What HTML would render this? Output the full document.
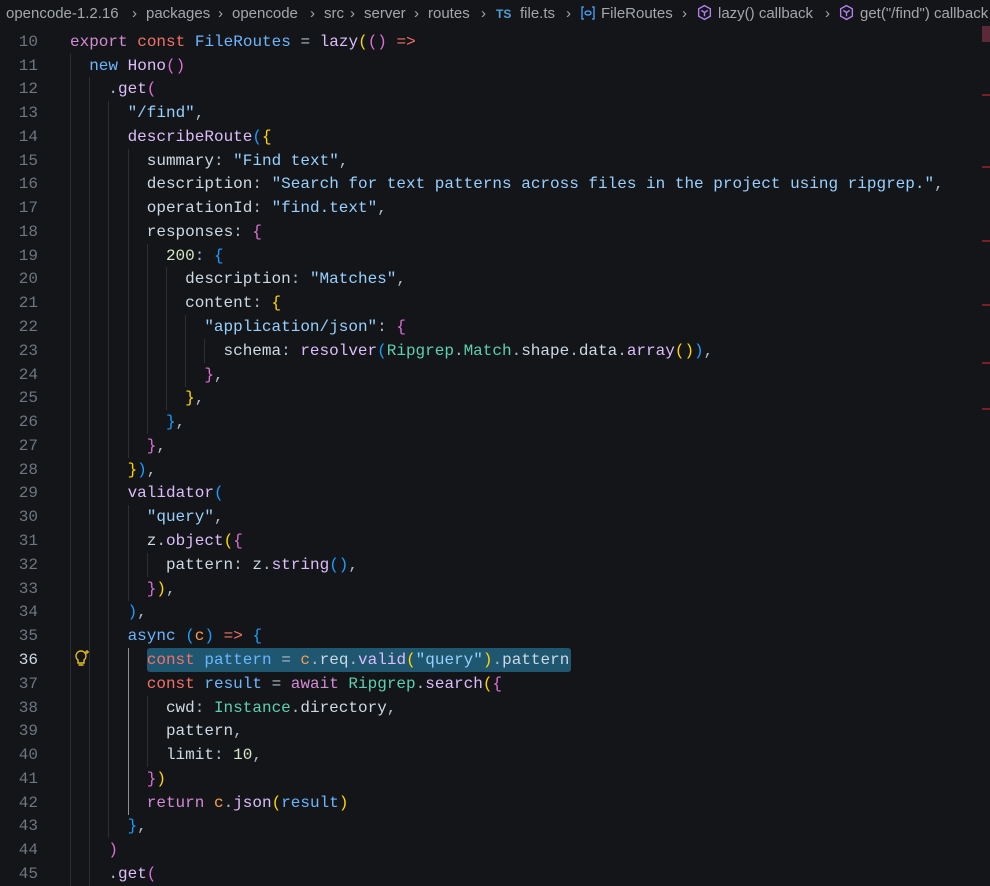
<!DOCTYPE html>
<html><head><meta charset="utf-8"><style>
html,body{margin:0;padding:0;background:#141518;width:990px;height:871px;overflow:hidden}
.bc{position:absolute;top:4px;height:20px;font:15px "Liberation Sans",sans-serif;color:#a3a6ab;white-space:nowrap;line-height:20px}
.sep{position:absolute;top:4px;font:15px "Liberation Sans",sans-serif;color:#a3a6ab;line-height:20px}
.ln{position:absolute;left:0;width:38px;text-align:right;font:16px "Liberation Mono",monospace;color:#6e7681;line-height:24px}
.cl{position:absolute;left:70px;font:16px "Liberation Mono",monospace;color:#adbac7;line-height:24px;white-space:pre;height:24px}
.g{display:inline-block;width:19.2px;height:24px;vertical-align:top;border-left:1px solid #2c2f34;box-sizing:border-box}
.ga{border-left-color:#8b9098}
.k{color:#f47067}.m{color:#d38bd6}.b{color:#6cb6ff}.f{color:#dcbdfb}.p{color:#cdd9e5}.s{color:#96d0ff}.t{color:#5ad1b0}.v{color:#6cb6ff}.c{color:#f69d50}.n{color:#d6e6c8}
.y{color:#ffd700}.pk{color:#da70d6}.bl{color:#179fff}
.sel{position:absolute;left:147px;top:648px;width:424px;height:24px;background:#1f5670;border-radius:3px}
.mm{position:absolute;right:0;width:8px;height:2px;background:#7a1f28}
</style></head><body>
<div class="bc" style="left:6px">opencode-1.2.16</div><div class="sep" style="left:132px">›</div>
<div class="bc" style="left:146px">packages</div><div class="sep" style="left:218px">›</div>
<div class="bc" style="left:232px">opencode</div><div class="sep" style="left:310px">›</div>
<div class="bc" style="left:324px">src</div><div class="sep" style="left:350px">›</div>
<div class="bc" style="left:364px">server</div><div class="sep" style="left:414px">›</div>
<div class="bc" style="left:428px">routes</div><div class="sep" style="left:481px">›</div>
<div class="bc" style="left:496px;color:#4b9fd6;font-weight:bold;font-size:12px">TS</div>
<div class="bc" style="left:520px">file.ts</div><div class="sep" style="left:566px">›</div>
<svg style="position:absolute;left:580px;top:5px" width="16" height="16" viewBox="0 0 16 16" fill="none" stroke="#4aa3ff" stroke-width="1.3"><path d="M4 2H2v12h2M12 2h2v12h-2"/><ellipse cx="8" cy="8" rx="3" ry="2"/></svg>
<div class="bc" style="left:601px">FileRoutes</div><div class="sep" style="left:682px">›</div>
<svg style="position:absolute;left:696px;top:4px" width="17" height="17" viewBox="0 0 16 16" fill="none" stroke="#b180f0" stroke-width="1.3"><path d="M8 1.5l5.5 3v7L8 14.5l-5.5-3v-7z"/><path d="M5 6l3 2 3-2M8 8v3.5"/></svg>
<div class="bc" style="left:718px">lazy() callback</div><div class="sep" style="left:825px">›</div>
<svg style="position:absolute;left:838px;top:4px" width="17" height="17" viewBox="0 0 16 16" fill="none" stroke="#b180f0" stroke-width="1.3"><path d="M8 1.5l5.5 3v7L8 14.5l-5.5-3v-7z"/><path d="M5 6l3 2 3-2M8 8v3.5"/></svg>
<div class="bc" style="left:860px">get("/find") callback</div>

<div class="sel"></div>
<svg style="position:absolute;left:73px;top:648px" width="18" height="20" viewBox="0 0 18 20" fill="none" stroke="#e8c41a" stroke-width="1.4"><path d="M8 3a5 5 0 0 0-3 9v3h6v-3a5 5 0 0 0-3-9z M5.5 17h5"/><path d="M14 2v4M12 4h4" stroke-width="1.2"/></svg>

<div class="ln" style="top:30px">10</div><div class="cl" style="top:30px"><span class="m">export</span> <span class="k">const</span> <span class="v">FileRoutes</span> = <span class="f">lazy</span><span class="y">(</span><span class="pk">()</span> <span class="k">=&gt;</span></div>
<div class="ln" style="top:54px">11</div><div class="cl" style="top:54px"><span class="g"></span><span class="b">new</span> <span class="f">Hono</span><span class="pk">()</span></div>
<div class="ln" style="top:77px">12</div><div class="cl" style="top:77px"><span class="g"></span><span class="g"></span>.<span class="f">get</span><span class="pk">(</span></div>
<div class="ln" style="top:101px">13</div><div class="cl" style="top:101px"><span class="g"></span><span class="g"></span><span class="g"></span><span class="s">"/find"</span>,</div>
<div class="ln" style="top:125px">14</div><div class="cl" style="top:125px"><span class="g"></span><span class="g"></span><span class="g"></span><span class="f">describeRoute</span><span class="bl">(</span><span class="y">{</span></div>
<div class="ln" style="top:149px">15</div><div class="cl" style="top:149px"><span class="g"></span><span class="g"></span><span class="g"></span><span class="g"></span><span class="p">summary</span>: <span class="s">"Find text"</span>,</div>
<div class="ln" style="top:172px">16</div><div class="cl" style="top:172px"><span class="g"></span><span class="g"></span><span class="g"></span><span class="g"></span><span class="p">description</span>: <span class="s">"Search for text patterns across files in the project using ripgrep."</span>,</div>
<div class="ln" style="top:196px">17</div><div class="cl" style="top:196px"><span class="g"></span><span class="g"></span><span class="g"></span><span class="g"></span><span class="p">operationId</span>: <span class="s">"find.text"</span>,</div>
<div class="ln" style="top:220px">18</div><div class="cl" style="top:220px"><span class="g"></span><span class="g"></span><span class="g"></span><span class="g"></span><span class="p">responses</span>: <span class="pk">{</span></div>
<div class="ln" style="top:244px">19</div><div class="cl" style="top:244px"><span class="g"></span><span class="g"></span><span class="g"></span><span class="g"></span><span class="g"></span><span class="n">200</span>: <span class="bl">{</span></div>
<div class="ln" style="top:267px">20</div><div class="cl" style="top:267px"><span class="g"></span><span class="g"></span><span class="g"></span><span class="g"></span><span class="g"></span><span class="g"></span><span class="p">description</span>: <span class="s">"Matches"</span>,</div>
<div class="ln" style="top:291px">21</div><div class="cl" style="top:291px"><span class="g"></span><span class="g"></span><span class="g"></span><span class="g"></span><span class="g"></span><span class="g"></span><span class="p">content</span>: <span class="y">{</span></div>
<div class="ln" style="top:315px">22</div><div class="cl" style="top:315px"><span class="g"></span><span class="g"></span><span class="g"></span><span class="g"></span><span class="g"></span><span class="g"></span><span class="g"></span><span class="s">"application/json"</span>: <span class="pk">{</span></div>
<div class="ln" style="top:339px">23</div><div class="cl" style="top:339px"><span class="g"></span><span class="g"></span><span class="g"></span><span class="g"></span><span class="g"></span><span class="g"></span><span class="g"></span><span class="g"></span><span class="p">schema</span>: <span class="f">resolver</span><span class="bl">(</span><span class="t">Ripgrep</span>.<span class="t">Match</span>.<span class="p">shape</span>.<span class="p">data</span>.<span class="f">array</span><span class="y">()</span><span class="bl">)</span>,</div>
<div class="ln" style="top:363px">24</div><div class="cl" style="top:363px"><span class="g"></span><span class="g"></span><span class="g"></span><span class="g"></span><span class="g"></span><span class="g"></span><span class="g"></span><span class="pk">}</span>,</div>
<div class="ln" style="top:386px">25</div><div class="cl" style="top:386px"><span class="g"></span><span class="g"></span><span class="g"></span><span class="g"></span><span class="g"></span><span class="g"></span><span class="y">}</span>,</div>
<div class="ln" style="top:410px">26</div><div class="cl" style="top:410px"><span class="g"></span><span class="g"></span><span class="g"></span><span class="g"></span><span class="g"></span><span class="bl">}</span>,</div>
<div class="ln" style="top:434px">27</div><div class="cl" style="top:434px"><span class="g"></span><span class="g"></span><span class="g"></span><span class="g"></span><span class="pk">}</span>,</div>
<div class="ln" style="top:458px">28</div><div class="cl" style="top:458px"><span class="g"></span><span class="g"></span><span class="g"></span><span class="y">}</span><span class="bl">)</span>,</div>
<div class="ln" style="top:481px">29</div><div class="cl" style="top:481px"><span class="g"></span><span class="g"></span><span class="g"></span><span class="f">validator</span><span class="bl">(</span></div>
<div class="ln" style="top:505px">30</div><div class="cl" style="top:505px"><span class="g"></span><span class="g"></span><span class="g"></span><span class="g"></span><span class="s">"query"</span>,</div>
<div class="ln" style="top:529px">31</div><div class="cl" style="top:529px"><span class="g"></span><span class="g"></span><span class="g"></span><span class="g"></span><span class="p">z</span>.<span class="f">object</span><span class="y">(</span><span class="pk">{</span></div>
<div class="ln" style="top:553px">32</div><div class="cl" style="top:553px"><span class="g"></span><span class="g"></span><span class="g"></span><span class="g"></span><span class="g"></span><span class="p">pattern</span>: <span class="p">z</span>.<span class="f">string</span><span class="bl">()</span>,</div>
<div class="ln" style="top:577px">33</div><div class="cl" style="top:577px"><span class="g"></span><span class="g"></span><span class="g"></span><span class="g"></span><span class="pk">}</span><span class="y">)</span>,</div>
<div class="ln" style="top:600px">34</div><div class="cl" style="top:600px"><span class="g"></span><span class="g"></span><span class="g"></span><span class="bl">)</span>,</div>
<div class="ln" style="top:624px">35</div><div class="cl" style="top:624px"><span class="g"></span><span class="g"></span><span class="g"></span><span class="b">async</span> <span class="bl">(</span><span class="c">c</span><span class="bl">)</span> <span class="k">=&gt;</span> <span class="bl">{</span></div>
<div class="ln" style="top:648px;color:#cdd9e5">36</div><div class="cl" style="top:648px"><span class="g"></span><span class="g"></span><span class="g"></span><span class="g ga"></span><span class="k">const</span> <span class="v">pattern</span> = <span class="c">c</span>.<span class="p">req</span>.<span class="f">valid</span><span class="y">(</span><span class="s">"query"</span><span class="y">)</span>.<span class="p">pattern</span></div>
<div class="ln" style="top:672px">37</div><div class="cl" style="top:672px"><span class="g"></span><span class="g"></span><span class="g"></span><span class="g ga"></span><span class="k">const</span> <span class="v">result</span> = <span class="m">await</span> <span class="t">Ripgrep</span>.<span class="f">search</span><span class="y">(</span><span class="pk">{</span></div>
<div class="ln" style="top:696px">38</div><div class="cl" style="top:696px"><span class="g"></span><span class="g"></span><span class="g"></span><span class="g ga"></span><span class="g"></span><span class="p">cwd</span>: <span class="t">Instance</span>.<span class="p">directory</span>,</div>
<div class="ln" style="top:719px">39</div><div class="cl" style="top:719px"><span class="g"></span><span class="g"></span><span class="g"></span><span class="g ga"></span><span class="g"></span><span class="p">pattern</span>,</div>
<div class="ln" style="top:743px">40</div><div class="cl" style="top:743px"><span class="g"></span><span class="g"></span><span class="g"></span><span class="g ga"></span><span class="g"></span><span class="p">limit</span>: <span class="n">10</span>,</div>
<div class="ln" style="top:767px">41</div><div class="cl" style="top:767px"><span class="g"></span><span class="g"></span><span class="g"></span><span class="g ga"></span><span class="pk">}</span><span class="y">)</span></div>
<div class="ln" style="top:791px">42</div><div class="cl" style="top:791px"><span class="g"></span><span class="g"></span><span class="g"></span><span class="g ga"></span><span class="m">return</span> <span class="c">c</span>.<span class="f">json</span><span class="y">(</span><span class="v">result</span><span class="y">)</span></div>
<div class="ln" style="top:814px">43</div><div class="cl" style="top:814px"><span class="g"></span><span class="g"></span><span class="g"></span><span class="bl">}</span>,</div>
<div class="ln" style="top:838px">44</div><div class="cl" style="top:838px"><span class="g"></span><span class="g"></span><span class="pk">)</span></div>
<div class="ln" style="top:862px">45</div><div class="cl" style="top:862px"><span class="g"></span><span class="g"></span>.<span class="f">get</span><span class="pk">(</span></div>

<div style="position:absolute;right:0;top:26px;width:8px;height:16px;background:#5a2a38"></div>
<div class="mm" style="top:94px"></div><div class="mm" style="top:166px"></div><div class="mm" style="top:240px"></div>
<div class="mm" style="top:304px"></div><div class="mm" style="top:362px"></div><div class="mm" style="top:362px"></div>
<div class="mm" style="top:408px"></div>
</body></html>
